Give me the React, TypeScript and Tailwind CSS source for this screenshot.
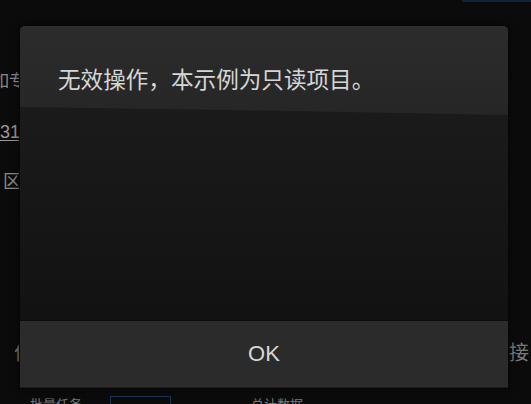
import React from "react";

const cjk = "font-['Liberation_Sans','Noto_Sans_CJK_SC',sans-serif]";

const Backdrop = () => (
  <div className={`flex h-full w-full flex-col ${cjk} text-[#8a8a8a]`}>
    <div className="flex h-[2px] justify-end">
      <div className="h-[2px] w-[69px] bg-[#0f2438]" />
    </div>
    <div className="mt-[70px] -ml-[8px] whitespace-nowrap text-[17px] leading-[20px]">如专业版</div>
    <div className="mt-[30px] whitespace-nowrap text-[18px] leading-[20px] text-[#9a9a9a] underline underline-offset-2">31</div>
    <div className="mt-[30px] ml-[3px] whitespace-nowrap text-[18px] leading-[20px]">区域</div>
    <div className="mt-[104px] h-[16px] w-full bg-[#1a1a1a] bg-[radial-gradient(#2c2c2c_1px,transparent_1px)] bg-[size:3px_3px]" />
    <div className="mt-[46px] flex justify-between pl-[14px] text-[20px] leading-[22px] text-[#7a7a7a]">
      <span>价</span>
      <span className="mr-[-18px]">接口</span>
    </div>
    <div className="mt-[32px] flex items-start gap-[28px] pl-[30px] text-[13px] leading-[14px] text-[#777]">
      <span className="pt-[2px]">批量任务</span>
      <div className="h-[12px] w-[61px] border border-[#173453]" />
      <span className="ml-[52px] pt-[2px]">总计数据</span>
    </div>
  </div>
);

export default function App() {
  return (
    <div className="relative h-[404px] w-[531px] overflow-hidden bg-[#0b0b0b]">
      <Backdrop />
      <div className="absolute left-[19px] top-[25px] flex h-[364px] w-[490px] flex-col overflow-hidden rounded-t-[6px] border border-[#070707] bg-[#121212] shadow-[0_0_8px_rgba(0,0,0,0.6)]">
        <div className="relative flex h-[294px] flex-col bg-[linear-gradient(180deg,#1e1e1e_0%,#121212_100%)]">
          <div className="absolute left-0 top-0 h-[89px] w-full bg-[linear-gradient(180deg,#2c2c2c_0%,#262626_100%)] [clip-path:polygon(0_0,100%_0,100%_100%,70%_97%,40%_94%,0_91%)]" />
          <p className={`relative pl-[38px] pt-[41px] text-[22.6px] leading-[28px] text-[#d6d6d6] ${cjk}`}>
            无效操作，本示例为只读项目。
          </p>
        </div>
        <div className="h-px bg-[#0c0c0c]" />
        <button className="flex h-[66px] items-center justify-center bg-[#2b2b2b] pb-[2px] font-['Liberation_Sans',sans-serif] text-[22px] text-[#d8d8d8]">
          OK
        </button>
        <div className="h-px bg-[#1c1c1c]" />
      </div>
    </div>
  );
}
